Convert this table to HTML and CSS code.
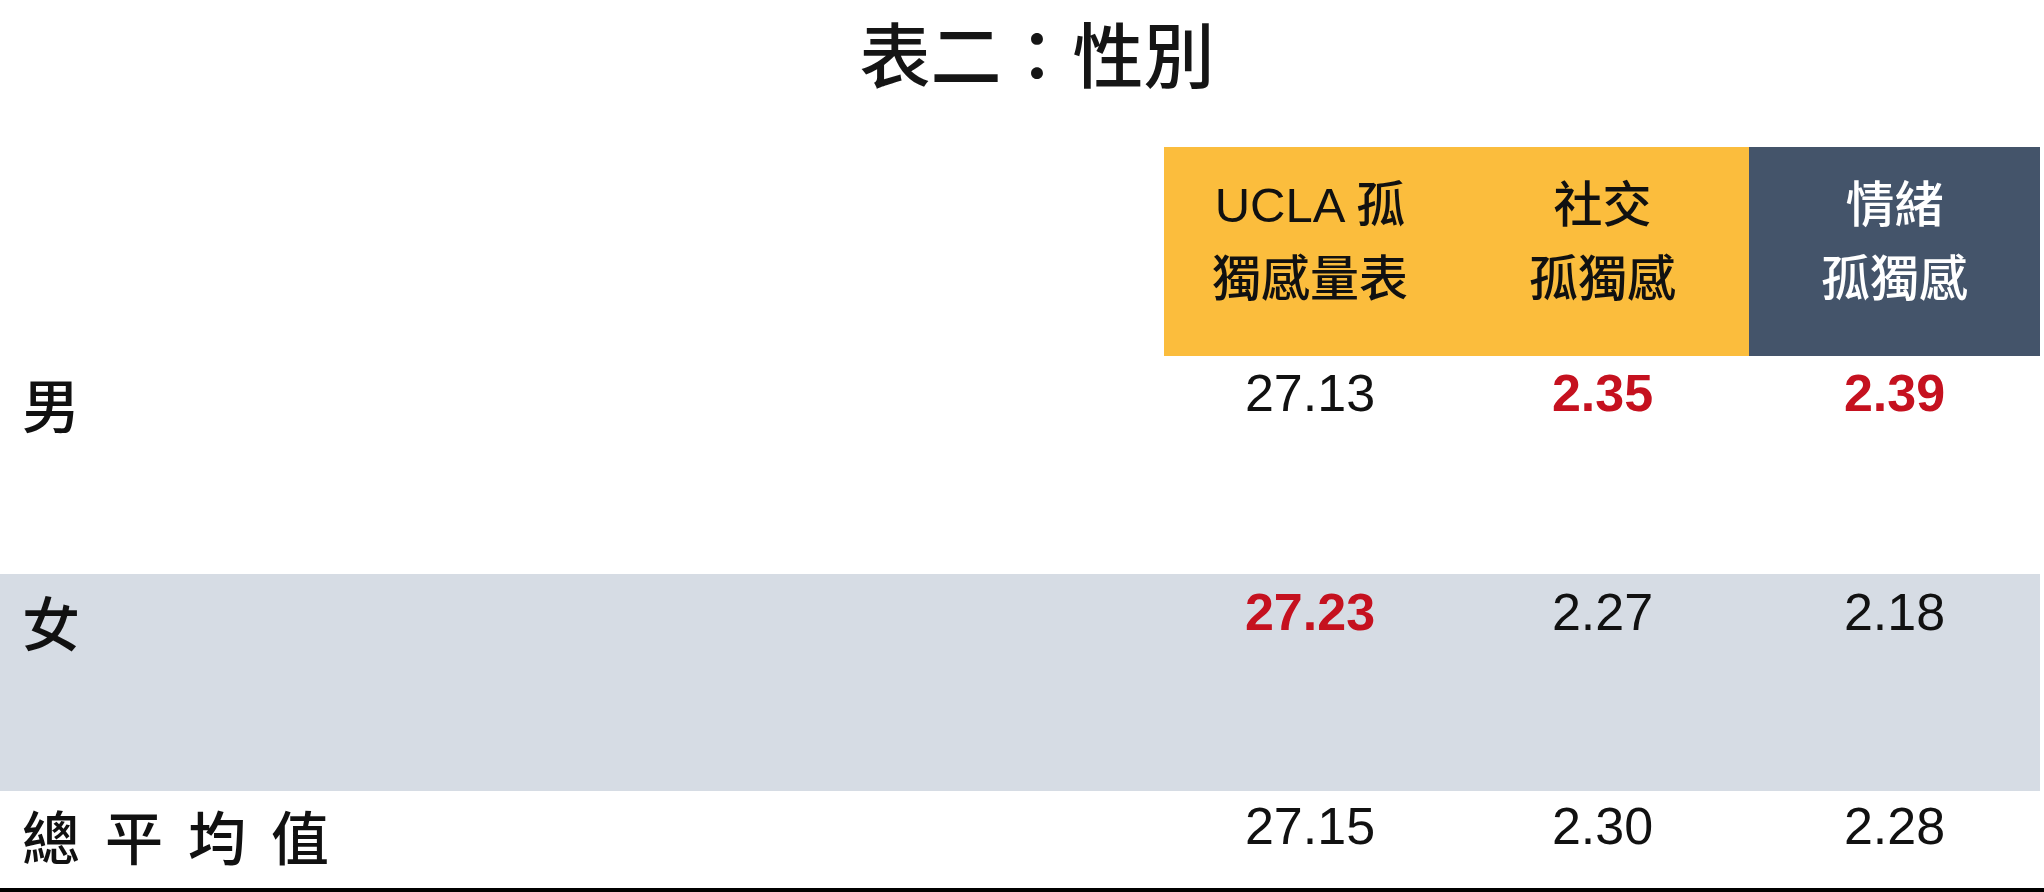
FILE: index.html
```html
<!DOCTYPE html>
<html lang="zh-Hant">
<head>
<meta charset="utf-8">
<link rel="stylesheet" href="styles.css">
</head>
<body>
<div class="page">
  <h1 class="title">表二：性別</h1>
  <div class="table">
    <div class="cell blank"></div>
    <div class="cell head yellow">UCLA 孤<br>獨感量表</div>
    <div class="cell head yellow">社交<br>孤獨感</div>
    <div class="cell head dark">情緒<br>孤獨感</div>

    <div class="cell label r1">男</div>
    <div class="cell num r1">27.13</div>
    <div class="cell num r1 hi">2.35</div>
    <div class="cell num r1 hi">2.39</div>

    <div class="cell label r2 shade">女</div>
    <div class="cell num r2 shade hi">27.23</div>
    <div class="cell num r2 shade">2.27</div>
    <div class="cell num r2 shade">2.18</div>

    <div class="cell label r3 spaced">總平均值</div>
    <div class="cell num r3">27.15</div>
    <div class="cell num r3">2.30</div>
    <div class="cell num r3">2.28</div>
  </div>
  <div class="rule"></div>
</div>
</body>
</html>
```

FILE: styles.css
```css
html, body {
  margin: 0;
  padding: 0;
  background: #ffffff;
}

.page {
  width: 2044px;
  height: 892px;
  display: flex;
  flex-direction: column;
  font-family: "Liberation Sans", "Noto Sans CJK TC", sans-serif;
  color: #111111;
}

.title {
  margin: 0;
  height: 147px;
  padding-left: 30px;
  font-family: "Noto Sans CJK TC", sans-serif;
  font-weight: 500;
  font-size: 71px;
  line-height: 103px;
  text-align: center;
  color: #151515;
}

.table {
  width: 2040px;
  display: grid;
  grid-template-columns: 1164px 292px 293px 291px;
  grid-template-rows: 209px 218px 217px 97px;
}

.cell {
  box-sizing: border-box;
}

.head {
  padding-top: 21px;
  font-family: "Liberation Sans", "Noto Sans CJK TC", sans-serif;
  font-weight: 500;
  font-size: 49px;
  line-height: 74px;
  text-align: center;
}

.yellow {
  background: #fbbd3d;
  color: #111111;
}

.dark {
  background: #44546a;
  color: #ffffff;
}

.label {
  padding-left: 22px;
  font-family: "Noto Sans CJK TC", sans-serif;
  font-weight: 500;
  font-size: 58px;
  line-height: 1;
  padding-top: 18px;
}

.spaced {
  letter-spacing: 25px;
  padding-top: 15px;
}

.num {
  font-family: "Liberation Sans", sans-serif;
  font-size: 52px;
  line-height: 1;
  text-align: center;
  padding-top: 11px;
}

.r2.num {
  padding-top: 12px;
}

.r3.num {
  padding-top: 9px;
}

.hi {
  color: #c5111f;
  font-weight: bold;
}

.shade {
  background: #d6dce4;
}

.rule {
  width: 2044px;
  height: 4px;
  background: #000000;
}
```
